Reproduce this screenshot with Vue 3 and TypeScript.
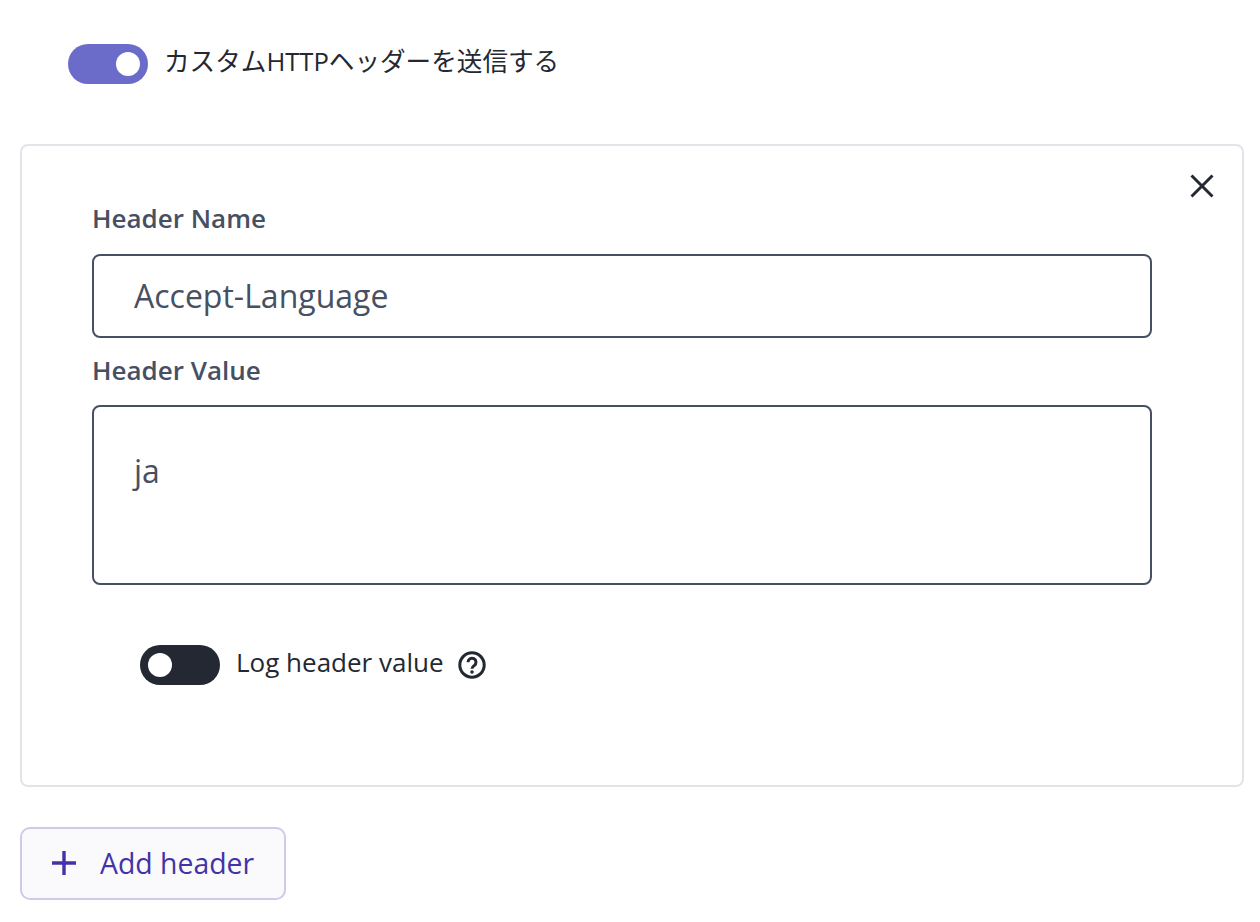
<script setup lang="ts">
const headerName = 'Accept-Language'
const headerValue = 'ja'
</script>

<template>
  <div class="page">
    <div class="toggle-row top">
      <span class="switch on"><span class="knob"></span></span>
      <span class="toggle-label jp">カスタムHTTPヘッダーを送信する</span>
    </div>

    <section class="card">
      <button class="close" type="button" aria-label="Remove header">
        <svg width="24" height="24" viewBox="0 0 24 24" fill="none" stroke="#232832" stroke-width="3">
          <path d="M1.5 1.5 22.5 22.5M22.5 1.5 1.5 22.5" />
        </svg>
      </button>
      <label class="field-label first">Header Name</label>
      <input class="control single" :value="headerName" />
      <label class="field-label second">Header Value</label>
      <textarea class="control multi" :value="headerValue"></textarea>
      <div class="toggle-row log">
        <span class="switch off"><span class="knob"></span></span>
        <span class="toggle-label">Log header value</span>
        <svg class="help" width="28" height="28" viewBox="0 0 28 28" fill="none" stroke="#232832">
          <circle cx="14" cy="14" r="12.2" stroke-width="3" />
          <path d="M10 11.2a4 4 0 1 1 6.3 3.3c-1.5 1-2.3 1.7-2.3 3.3" stroke-width="3" />
          <circle cx="14" cy="21" r="1.8" fill="#232832" stroke="none" />
        </svg>
      </div>
    </section>

    <button class="add" type="button">
      <svg width="24" height="24" viewBox="0 0 24 24" fill="none" stroke="#4433a6" stroke-width="3.4">
        <path d="M12 0V24M0 12H24" />
      </svg>
      <span>Add header</span>
    </button>
  </div>
</template>

<style>
html, body { background: #fff; }
</style>

<style scoped>
.page {
  box-sizing: border-box;
  width: 1260px;
  height: 922px;
  padding: 44px 16px 0 20px;
  font-family: "Open Sans", "Noto Sans CJK JP", sans-serif;
  overflow: hidden;
}
.toggle-row { display: flex; align-items: center; }
.top { padding-left: 48px; height: 40px; }
.switch {
  display: flex;
  align-items: center;
  width: 80px;
  height: 40px;
  border-radius: 20px;
  padding: 0 8px;
  box-sizing: border-box;
  flex: none;
}
.switch.on { background: #6b6bca; justify-content: flex-end; }
.switch.off { background: #232832; }
.knob { width: 24px; height: 24px; border-radius: 50%; background: #fff; }
.toggle-label {
  margin-left: 16px;
  font-size: 26px;
  line-height: 36px;
  color: #232832;
  position: relative;
  top: -3px;
}
.toggle-label.jp { font-size: 25.6px; top: -2px; }
.card {
  position: relative;
  box-sizing: border-box;
  margin-top: 60px;
  width: 1224px;
  height: 643px;
  border: 2px solid #e3e4e9;
  border-radius: 8px;
  padding: 54px 90px 0 70px;
}
.close {
  position: absolute;
  top: 28px;
  right: 28px;
  padding: 0;
  border: 0;
  background: none;
  display: flex;
}
.field-label {
  display: block;
  font-size: 26px;
  line-height: 36px;
  font-weight: 600;
  color: #475063;
}
.second { margin-top: 14px; }
.control {
  display: block;
  box-sizing: border-box;
  width: 1060px;
  border: 2px solid #475063;
  border-radius: 8px;
  background: #fff;
  font-family: inherit;
  font-size: 32px;
  color: #475063;
  padding: 0 40px;
  margin: 20px 0 0;
  outline: none;
  resize: none;
}
.first + .control { margin-top: 18px; }
.single { height: 84px; padding-bottom: 2px; }
.multi { height: 180px; margin-top: 17px; padding-top: 42px; line-height: 44px; }
.log { margin: 60px 0 0 48px; height: 40px; }
.help { margin-left: 14px; }
.add {
  display: flex;
  align-items: center;
  box-sizing: border-box;
  margin-top: 40px;
  width: 266px;
  height: 73px;
  padding: 0 0 2px 30px;
  border: 2px solid #cdcbec;
  border-radius: 10px;
  background: #fafafc;
  color: #4433a6;
  font-family: inherit;
  font-size: 28.4px;
}
.add span { margin-left: 24px; }
</style>
